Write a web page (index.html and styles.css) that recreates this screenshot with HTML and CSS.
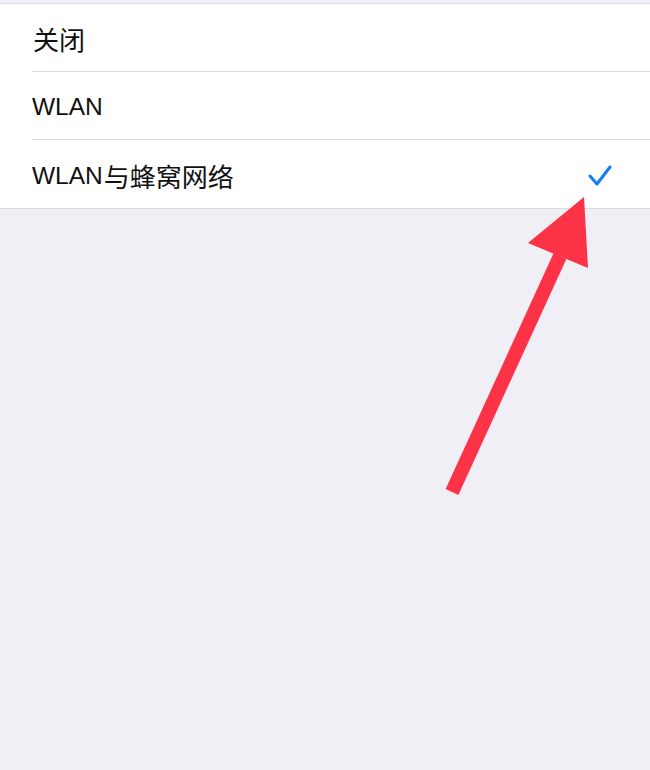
FILE: index.html
```html
<!DOCTYPE html>
<html lang="zh-CN">
<head>
<meta charset="utf-8">
<link rel="stylesheet" href="styles.css">
</head>
<body>
<div class="screen">
  <ul class="list">
    <li class="row"><span class="label"><span class="cjk">关闭</span></span></li>
    <li class="row"><span class="label">WLAN</span></li>
    <li class="row last"><span class="label">WLAN<span class="cjk">与蜂窝网络</span></span>
      <svg class="check" width="26" height="24" viewBox="0 0 26 24"><polyline points="3,11 10,19 23,2" fill="none" stroke="#167cf4" stroke-width="3" stroke-linecap="round" stroke-linejoin="round"/></svg>
    </li>
  </ul>
  <svg class="arrow" width="650" height="770" viewBox="0 0 650 770">
    <line x1="452" y1="492" x2="560" y2="256" stroke="#fc3246" stroke-width="14"/>
    <polygon points="584,197 528,243 588,268" fill="#fc3246"/>
  </svg>
</div>
</body>
</html>
```
FILE: styles.css
```css
html, body {
  margin: 0;
  padding: 0;
  background: #f0eff5;
}
.screen {
  position: relative;
  width: 650px;
  height: 770px;
  padding-top: 3px;
  box-sizing: border-box;
  font-family: "Liberation Sans", "Noto Sans CJK SC", sans-serif;
}
.list {
  list-style: none;
  margin: 0;
  padding: 0;
  background: #fff;
  border-top: 1px solid #dcdce0;
  border-bottom: 1px solid #dcdce0;
}
.row {
  position: relative;
  display: flex;
  align-items: center;
  justify-content: space-between;
  height: 67px;
  margin-left: 32px;
  padding-right: 37px;
  border-bottom: 1px solid #dcdce0;
}
.row.last {
  height: 68px;
  border-bottom: none;
}
.label {
  font-size: 24.5px;
  line-height: 30px;
  color: #111;
  display: flex;
  align-items: center;
  padding-top: 3px;
}
.cjk {
  font-family: "Noto Sans CJK SC", sans-serif;
  font-size: 26px;
  margin-left: 1px;
  font-weight: 400;
}
.check {
  display: block;
  margin-top: 5px;
}
.arrow {
  position: absolute;
  left: 0;
  top: 0;
  pointer-events: none;
}
```
